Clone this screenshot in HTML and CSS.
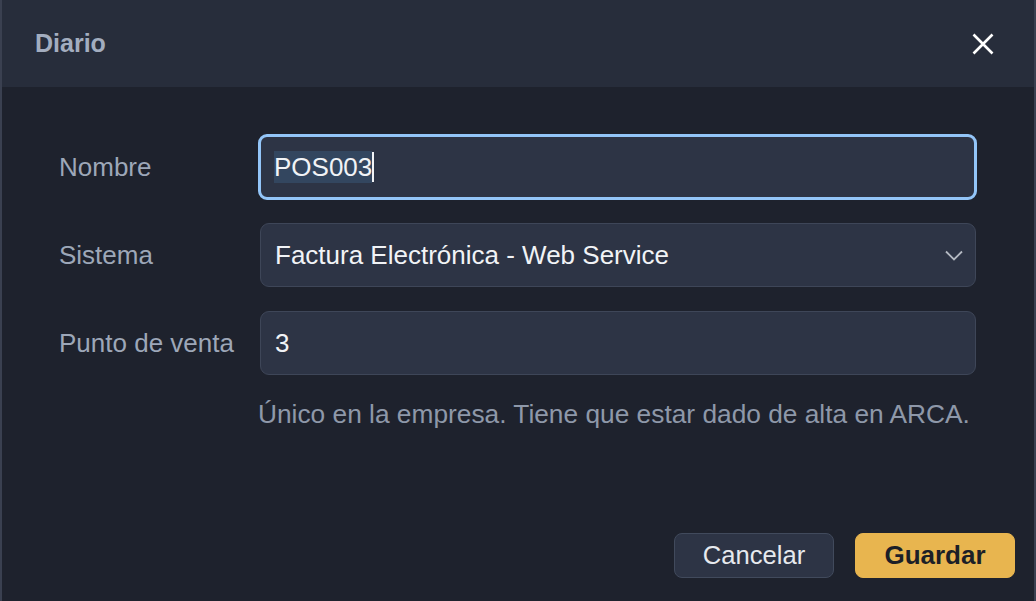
FILE: index.html
```html
<!DOCTYPE html>
<html lang="es">
<head>
<meta charset="utf-8">
<title>Diario</title>
<link rel="stylesheet" href="styles.css">
</head>
<body>
<div class="dialog">
  <header class="dialog-header">
    <h1 class="dialog-title">Diario</h1>
    <button class="close-btn" aria-label="Cerrar">
      <svg width="22" height="22" viewBox="0 0 22 22"><path d="M1.5 1.5 L20.5 20.5 M20.5 1.5 L1.5 20.5" stroke="#ffffff" stroke-width="2.6" stroke-linecap="butt" fill="none"/></svg>
    </button>
  </header>
  <main class="dialog-body">
    <div class="form-grid">
      <label class="field-label">Nombre</label>
      <div class="field field-focus"><span class="sel">POS003</span><span class="caret"></span></div>

      <label class="field-label">Sistema</label>
      <div class="field field-select">
        <span>Factura Electrónica - Web Service</span>
        <svg class="chevron" width="18" height="11" viewBox="0 0 18 11"><path d="M1 1.5 L9 9.5 L17 1.5" stroke="#b4b9c2" stroke-width="1.8" fill="none"/></svg>
      </div>

      <label class="field-label">Punto de venta</label>
      <div class="field">3</div>

      <div></div>
      <p class="help">Único en la empresa. Tiene que estar dado de alta en ARCA.</p>
    </div>
  </main>
  <footer class="dialog-footer">
    <button class="btn btn-secondary">Cancelar</button>
    <button class="btn btn-primary">Guardar</button>
  </footer>
</div>
</body>
</html>
```

FILE: styles.css
```css
* { box-sizing: border-box; }
html, body {
  margin: 0;
  padding: 0;
  height: 100%;
  background: #1e222d;
  font-family: "Liberation Sans", Arial, Helvetica, sans-serif;
  font-size: 26px;
  overflow: hidden;
}
.dialog {
  height: 601px;
  display: flex;
  flex-direction: column;
  background: #1e222d;
  border-left: 2px solid #3a4050;
  border-right: 2px solid #3a4050;
}
.dialog-header {
  height: 87px;
  flex: none;
  background: #272d3b;
  display: flex;
  align-items: center;
  justify-content: space-between;
  padding: 0 40px 0 33px;
}
.dialog-title {
  margin: 0;
  font-size: 25px;
  font-weight: bold;
  color: #a3adbf;
}
.close-btn {
  background: none;
  border: 0;
  padding: 0;
  width: 22px;
  height: 22px;
  display: flex;
}
.dialog-body {
  flex: 1;
  padding: 48px 58px 0 57px;
}
.form-grid {
  display: grid;
  grid-template-columns: 201px 1fr;
  row-gap: 24px;
  align-items: center;
}
.field-label {
  color: #9da7b8;
}
.field {
  height: 64px;
  background: #2d3445;
  border: 1.5px solid #3e4658;
  border-radius: 9px;
  padding: 0 14px;
  color: #f1f3f6;
  display: flex;
  align-items: center;
}
.field-focus {
  border: 3px solid #93c5f8;
  padding-left: 13px;
  margin: -1px -1px -1px -2px;
  height: 66px;
}
.sel {
  background: #33465f;
  line-height: 32px;
}
.caret {
  width: 1.5px;
  height: 30px;
  background: #f1f3f6;
}
.field-select {
  justify-content: space-between;
  padding-right: 12px;
}
.chevron { display: block; }
.help {
  margin: 0;
  color: #8e98a9;
  margin-left: -2px;
  font-size: 26.3px;
}
.dialog-footer {
  flex: none;
  display: flex;
  justify-content: flex-end;
  gap: 21px;
  padding: 0 19px 23px 0;
}
.btn {
  height: 45px;
  width: 160px;
  border-radius: 8px;
  font-family: inherit;
  font-size: 25.6px;
  padding: 0;
}
.btn-secondary {
  background: #2d3445;
  border: 1.5px solid #414a5c;
  color: #e6e9ee;
}
.btn-primary {
  background: #e8b54f;
  border: 1.5px solid #e8b54f;
  color: #1c1f27;
  font-weight: bold;
  font-size: 26px;
}
```
